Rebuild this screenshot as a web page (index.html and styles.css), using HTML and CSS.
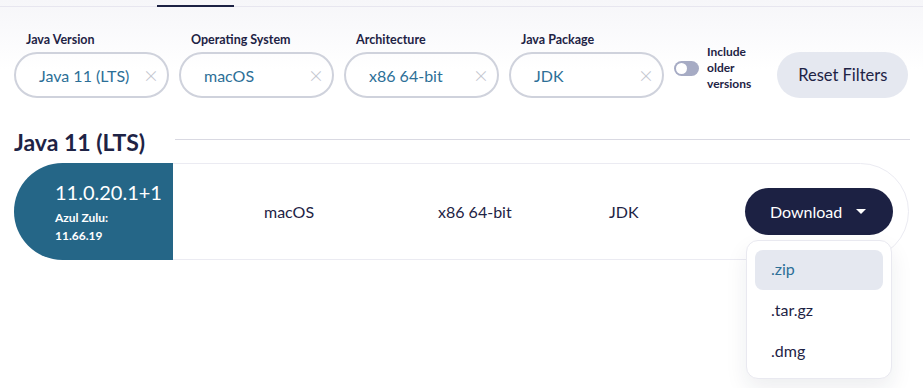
FILE: index.html
```html
<!DOCTYPE html>
<html lang="en">
<head>
<meta charset="utf-8">
<title>Downloads</title>
<link rel="stylesheet" href="styles.css">
</head>
<body>
<div class="tabs"><div class="tab-active"></div></div>

<div class="filters">
  <div class="filter">
    <div class="filter-label">Java Version</div>
    <div class="pill"><span class="pill-value">Java 11 (LTS)</span><span class="pill-clear">×</span></div>
  </div>
  <div class="filter">
    <div class="filter-label">Operating System</div>
    <div class="pill"><span class="pill-value">macOS</span><span class="pill-clear">×</span></div>
  </div>
  <div class="filter">
    <div class="filter-label">Architecture</div>
    <div class="pill"><span class="pill-value">x86 64-bit</span><span class="pill-clear">×</span></div>
  </div>
  <div class="filter">
    <div class="filter-label">Java Package</div>
    <div class="pill"><span class="pill-value">JDK</span><span class="pill-clear">×</span></div>
  </div>
  <div class="toggle-group">
    <span class="toggle"><span class="knob"></span></span>
    <span class="toggle-text">Include<br>older<br>versions</span>
  </div>
  <button class="reset">Reset Filters</button>
</div>

<div class="section-head">
  <h2 class="section-title">Java 11 (LTS)</h2>
  <div class="section-line"></div>
</div>

<div class="card">
  <div class="version">
    <div class="version-num">11.0.20.1+1</div>
    <div class="version-sub">Azul Zulu:<br>11.66.19</div>
  </div>
  <div class="cell cell-os">macOS</div>
  <div class="cell cell-arch">x86 64-bit</div>
  <div class="cell cell-pkg">JDK</div>
  <div class="download-wrap">
    <button class="download">Download <svg class="caret" width="10" height="5" viewBox="0 0 10 5"><path d="M0 0h10L5 5z" fill="#fff"/></svg></button>
    <div class="menu">
      <div class="menu-item active">.zip</div>
      <div class="menu-item">.tar.gz</div>
      <div class="menu-item">.dmg</div>
    </div>
  </div>
</div>
</body>
</html>
```

FILE: styles.css
```css
* { box-sizing: border-box; }
html, body { margin: 0; }
body {
  font-family: Lato, "Open Sans", sans-serif;
  color: #1e2345;
  background: linear-gradient(#f6f6f9 0, #ffffff 70px) no-repeat;
  background-color: #fff;
  width: 923px;
  height: 388px;
  overflow: hidden;
}
.tabs {
  display: flex;
  align-items: flex-end;
  height: 7px;
  padding-left: 157px;
  border-bottom: 1px solid #e7e6ef;
}
.tab-active {
  width: 77px;
  height: 2px;
  margin-bottom: -1px;
  background: #1c2143;
}
.filters {
  display: flex;
  align-items: flex-end;
  gap: 10px;
  padding: 0 14px;
  margin-top: 25px;
}
.filter-label {
  font-size: 12.5px;
  font-weight: 700;
  line-height: 16px;
  margin: 0 0 4px 12px;
  color: #1e2345;
}
.pill {
  display: flex;
  align-items: center;
  justify-content: space-between;
  width: 155px;
  height: 46px;
  border: 2px solid #cfd2dc;
  border-radius: 23px;
  padding: 0 9px 0 23px;
}
.pill-value {
  font-size: 16px;
  color: #2c6f97;
}
.pill-clear {
  font-size: 24px;
  font-weight: 300;
  color: #c3c6cf;
  line-height: 1;
}
.toggle-group {
  display: flex;
  align-items: center;
  gap: 8px;
  margin-bottom: 6px;
}
.toggle {
  display: flex;
  align-items: center;
  width: 25px;
  height: 15px;
  border-radius: 8px;
  background: #a6abc4;
  padding: 0 2px;
}
.knob {
  width: 11px;
  height: 11px;
  border-radius: 50%;
  background: #fff;
}
.toggle-text {
  font-size: 12px;
  font-weight: 700;
  line-height: 16px;
  color: #1e2345;
}
.reset {
  margin-left: 16px;
  width: 131px;
  height: 46px;
  border: 0;
  border-radius: 23px;
  background: #e5e8f0;
  font-family: inherit;
  font-size: 16.5px;
  color: #1e2345;
}
.section-head {
  display: flex;
  align-items: flex-start;
  margin: 30px 13px 0 14px;
}
.section-title {
  margin: 0;
  font-size: 23px;
  font-weight: 700;
  line-height: 28px;
}
.section-line {
  flex: 1;
  height: 1px;
  margin: 11px 0 0 30px;
  background: #d9d9e2;
}
.card {
  display: flex;
  align-items: center;
  height: 97px;
  margin: 7px 14px 0 14px;
  border: 1px solid #ebebf2;
  border-radius: 49px;
  background: #fff;
}
.version {
  align-self: stretch;
  width: 159px;
  margin: -1px 0 -1px -1px;
  padding: 16px 0 0 41px;
  background: #256687;
  border-radius: 49px 0 0 49px;
  color: #fff;
}
.version-num {
  font-size: 20px;
  line-height: 26px;
}
.version-sub {
  margin-top: 4px;
  font-size: 12px;
  font-weight: 700;
  line-height: 18px;
}
.cell {
  font-size: 16px;
  color: #1e2345;
}
.cell-os { margin-left: 91px; width: 174px; }
.cell-arch { width: 171px; }
.cell-pkg { flex: 1; }
.download-wrap {
  position: relative;
  margin-right: 15px;
}
.download {
  display: flex;
  align-items: center;
  justify-content: space-between;
  width: 148px;
  height: 47px;
  padding: 0 27px 0 25px;
  border: 0;
  border-radius: 24px;
  background: #1c2143;
  color: #fff;
  font-family: inherit;
  font-size: 16px;
}
.caret { display: block; }
.menu {
  position: absolute;
  top: 52px;
  left: 1px;
  width: 146px;
  padding: 9px 8px 6px;
  display: flex;
  flex-direction: column;
  gap: 1px;
  background: #fff;
  border: 1px solid #e9e9f0;
  border-radius: 12px;
  box-shadow: 0 10px 22px rgba(30, 35, 69, 0.08);
}
.menu-item {
  height: 40px;
  display: flex;
  align-items: center;
  padding: 0 0 3px 16px;
  border-radius: 8px;
  font-size: 16px;
  color: #1e2345;
}
.menu-item.active {
  background: #e5e8f0;
  color: #2c6f97;
}
```
